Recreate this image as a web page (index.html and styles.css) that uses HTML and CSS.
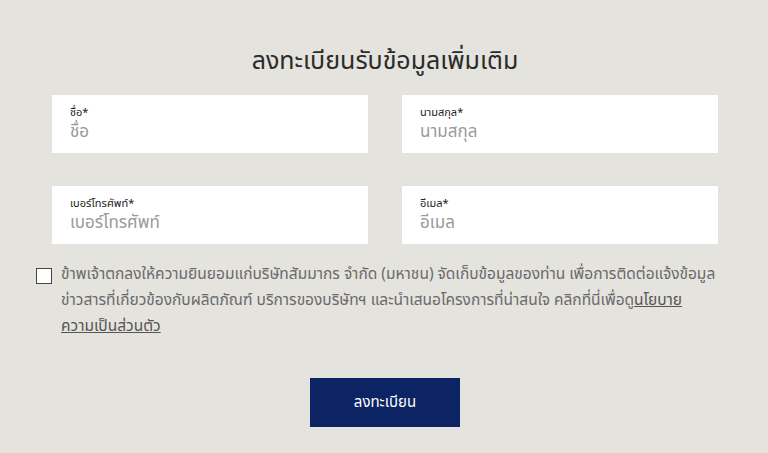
FILE: index.html
```html
<!DOCTYPE html>
<html lang="th">
<head>
    <meta charset="UTF-8">
    <meta name="viewport" content="width=device-width, initial-scale=1.0">
    <title>ลงทะเบียนรับข้อมูลเพิ่มเติม</title>
    <link rel="stylesheet" href="styles.css">
</head>
<body>

    <div class="register">
        <h1>ลงทะเบียนรับข้อมูลเพิ่มเติม</h1>

        <form class="register-form">
            <!-- Fields -->
            <div class="fields">
                <label class="field">
                    <span class="field-label">ชื่อ*</span>
                    <input type="text" name="firstname" placeholder="ชื่อ">
                </label>
                <label class="field">
                    <span class="field-label">นามสกุล*</span>
                    <input type="text" name="lastname" placeholder="นามสกุล">
                </label>
                <label class="field">
                    <span class="field-label">เบอร์โทรศัพท์*</span>
                    <input type="text" name="phone" placeholder="เบอร์โทรศัพท์">
                </label>
                <label class="field">
                    <span class="field-label">อีเมล*</span>
                    <input type="email" name="email" placeholder="อีเมล">
                </label>
            </div>

            <!-- Consent -->
            <label class="consent">
                <input type="checkbox" id="agree-checkbox">
                <span class="consent-text"><span class="line">ข้าพเจ้าตกลงให้ความยินยอมแก่บริษัทสัมมากร จำกัด (มหาชน) จัดเก็บข้อมูลของท่าน เพื่อการติดต่อแจ้งข้อมูล</span><br><span class="line">ข่าวสารที่เกี่ยวข้องกับผลิตภัณฑ์ บริการของบริษัทฯ และนำเสนอโครงการที่น่าสนใจ คลิกที่นี่เพื่อดู<a href="#">นโยบาย</a></span><br><a href="#">ความเป็นส่วนตัว</a></span>
            </label>

            <div class="submit-row">
                <button type="button">ลงทะเบียน</button>
            </div>
        </form>
    </div>

</body>
</html>
```

FILE: styles.css
```css
/* Basic Styling */
body {
    margin: 0;
    background-color: #e4e3de;
    font-family: "Noto Sans Thai", "Noto Sans", "DejaVu Sans", sans-serif;
    color: #333;
}
.register {
    padding: 41px 33px 0 35px;
}
h1 {
    margin: 0 0 14px;
    text-align: center;
    font-size: 25px;
    font-weight: normal;
    color: #2b2b2b;
    line-height: 40px;
}
/* Field Grid */
.fields {
    display: grid;
    grid-template-columns: 316px 316px;
    column-gap: 34px;
    row-gap: 33px;
    justify-content: center;
}
.field {
    display: flex;
    flex-direction: column;
    justify-content: center;
    height: 58px;
    padding: 1px 18px 0;
    background-color: #fff;
    box-sizing: border-box;
}
.field-label {
    font-size: 11px;
    line-height: 14px;
    color: #222;
}
.field input {
    border: none;
    outline: none;
    padding: 0;
    font-family: inherit;
    font-size: 17px;
    line-height: 24px;
    color: #333;
    background: transparent;
}
.field input::placeholder {
    color: #9a9a9a;
}
/* Consent */
.consent {
    display: flex;
    align-items: flex-start;
    gap: 9px;
    margin-top: 18px;
    margin-left: 1px;
    font-size: 15.5px;
    line-height: 26px;
    color: #6a6a6a;
}
.consent .line {
    white-space: nowrap;
}
.consent input {
    flex: none;
    width: 16px;
    height: 16px;
    margin: 6px 0 0;
    appearance: none;
    border: 1px solid #444;
    background-color: #fff;
}
.consent a {
    color: #555;
    text-decoration: underline;
}
/* Submit */
.submit-row {
    text-align: center;
    margin-top: 38px;
}
button {
    width: 150px;
    height: 49px;
    border: none;
    background-color: #0c2464;
    color: #fff;
    font-family: inherit;
    font-size: 15px;
    cursor: pointer;
}
```
